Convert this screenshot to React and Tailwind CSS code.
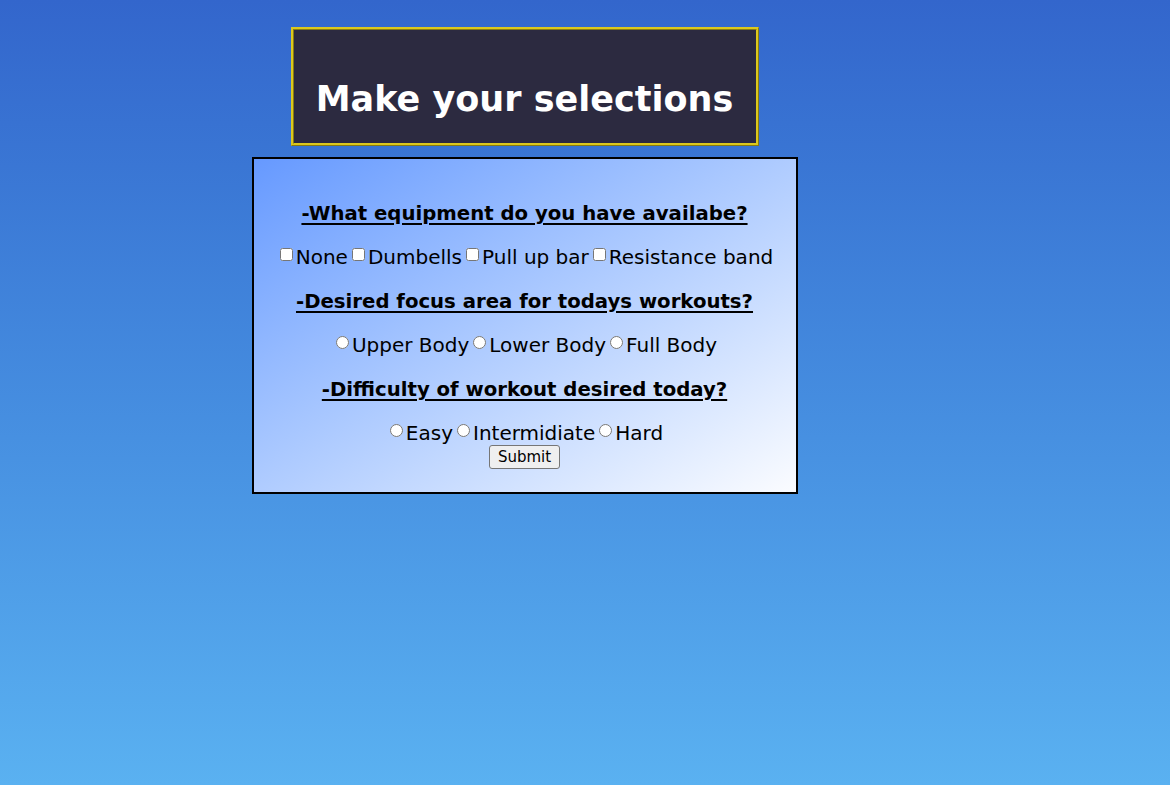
import React from 'react';

const font = { fontFamily: '"DejaVu Sans", Verdana, sans-serif' };

// 选项行
const OptionRow = ({ type, name, items }) => (
  <div className="flex items-center justify-center leading-6 text-[20px] text-black">
    {items.map((item) => (
      <label key={item} className="flex items-center">
        <input
          type={type}
          name={name}
          className="mt-[-6px] ml-[4px] mr-[3px] h-[13px] w-[13px]"
        />
        <span>{item}</span>
      </label>
    ))}
  </div>
);

const Question = ({ children }) => (
  <h3 className="translate-y-[1px] text-center text-[19.7px] leading-6 font-bold underline decoration-[2px] underline-offset-[3px] text-black">
    {children}
  </h3>
);

export default function App() {
  return (
    <div
      className="min-h-[785px] w-full bg-gradient-to-b from-[#3366cc] to-[#5ab1f1] pt-[27px]"
      style={font}
    >
      <div className="w-[1049px]">
        {/* 标题 */}
        <div className="mx-auto flex h-[119px] w-[468px] items-center justify-center border-[3px] border-[#dcc81c] [border-style:ridge] bg-[#2c2a40] pt-[24px]">
          <h1 className="text-[35px] font-bold leading-[42px] text-white">
            Make your selections
          </h1>
        </div>

        {/* 表单 */}
        <form className="mx-auto mt-[11px] w-[546px] border-2 border-black bg-gradient-to-br from-[#6699ff] to-[#fbfcff] pt-[42px] pb-[23px]">
          <Question>-What equipment do you have availabe?</Question>
          <div className="mt-[20px]">
            <OptionRow
              type="checkbox"
              name="equip"
              items={['None', 'Dumbells', 'Pull up bar', 'Resistance band']}
            />
          </div>
          <div className="mt-[20px]">
            <Question>-Desired focus area for todays workouts?</Question>
          </div>
          <div className="mt-[20px]">
            <OptionRow
              type="radio"
              name="focus"
              items={['Upper Body', 'Lower Body', 'Full Body']}
            />
          </div>
          <div className="mt-[20px]">
            <Question>-Difficulty of workout desired today?</Question>
          </div>
          <div className="mt-[20px]">
            <OptionRow
              type="radio"
              name="difficulty"
              items={['Easy', 'Intermidiate', 'Hard']}
            />
          </div>
          <div className="flex justify-center">
            <button
              type="button"
              className="h-[24px] w-[71px] rounded-[3px] border border-[#767676] bg-[#efefef] text-[15px] leading-none text-black"
            >
              Submit
            </button>
          </div>
        </form>
      </div>
    </div>
  );
}
